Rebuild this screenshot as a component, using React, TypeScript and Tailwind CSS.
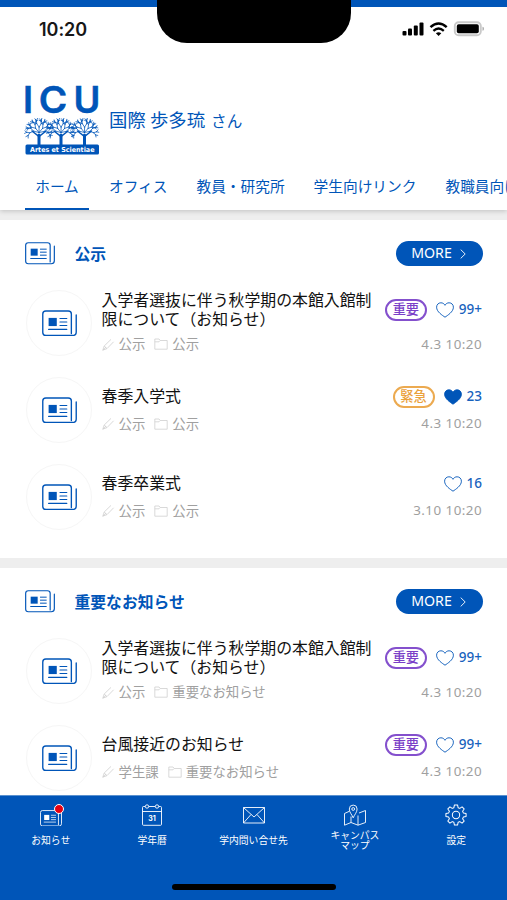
import React from "react";

const jp = "font-['Noto_Sans_CJK_JP',sans-serif]";
const latin = "font-['Noto_Sans','Noto_Sans_CJK_JP',sans-serif]";

type Priority = "重要" | "緊急";

interface Notice {
  title: string[];
  author: string;
  category: string;
  date: string;
  likes: string;
  liked?: boolean;
  priority?: Priority;
}

const announcements: Notice[] = [
  { title: ["入学者選抜に伴う秋学期の本館入館制", "限について（お知らせ）"], author: "公示", category: "公示", date: "4.3 10:20", likes: "99+", priority: "重要" },
  { title: ["春季入学式"], author: "公示", category: "公示", date: "4.3 10:20", likes: "23", liked: true, priority: "緊急" },
  { title: ["春季卒業式"], author: "公示", category: "公示", date: "3.10 10:20", likes: "16" },
];

const importantNotices: Notice[] = [
  { title: ["入学者選抜に伴う秋学期の本館入館制", "限について（お知らせ）"], author: "公示", category: "重要なお知らせ", date: "4.3 10:20", likes: "99+", priority: "重要" },
  { title: ["台風接近のお知らせ"], author: "学生課", category: "重要なお知らせ", date: "4.3 10:20", likes: "99+", priority: "重要" },
];

function NewsIcon({ className }: { className: string }) {
  return (
    <svg viewBox="0 0 36 27" className={className} fill="none" stroke="currentColor" strokeWidth="1.4" strokeLinecap="round">
      <path d="M35.2 5V22.5Q35.2 26.1 31.5 26.1H4Q.8 26.1 .8 23V4Q.8 .9 4 .9H27Q30.2 .9 30.2 4V24" />
      <rect x="6.8" y="8" width="8.4" height="8.4" fill="currentColor" stroke="none" />
      <path d="M18.5 8.6H25.5M18.5 12.2H25.5M18.5 15.8H25.5M6.8 19.8H25.5" strokeWidth="1.2" />
    </svg>
  );
}

function PenIcon() {
  return (
    <svg viewBox="0 0 13 13" className="size-[13px] shrink-0 text-[#cfcfcf]" fill="none" stroke="currentColor" strokeWidth=".8" strokeLinejoin="round">
      <path d="M.8 12.2 2.2 8 9 1.4M.8 12.2 5 10.6 11.6 3.8M2.2 8 5 10.6M.8 12.2 4 9.2" />
    </svg>
  );
}

function FolderIcon() {
  return (
    <svg viewBox="0 0 14 12" className="h-3 w-3.5 shrink-0 text-[#cfcfcf]" fill="none" stroke="currentColor" strokeWidth=".8">
      <path d="M.8 1H5L6.2 2.5H13.2V11.2H.8ZM.8 3.8H5L6.2 2.5" />
    </svg>
  );
}

function Heart({ filled }: { filled?: boolean }) {
  return (
    <svg viewBox="0 0 18 16" className="h-4 w-[18px] text-[#0055b8]" fill={filled ? "currentColor" : "none"} stroke="currentColor" strokeWidth=".9">
      <path d="M9 15.2C6.5 13.4.6 9.9.6 5.2.6 2.6 2.5.8 4.9.8 6.8.8 8.2 1.8 9 3.3 9.8 1.8 11.2.8 13.1.8 15.5.8 17.4 2.6 17.4 5.2 17.4 9.9 11.5 13.4 9 15.2Z" />
    </svg>
  );
}

function branch(x: number, y: number, angle: number, length: number, depth: number): string {
  const ex = x + Math.cos(angle) * length;
  const ey = y + Math.sin(angle) * length;
  const line = `M${x.toFixed(1)} ${y.toFixed(1)}L${ex.toFixed(1)} ${ey.toFixed(1)}`;
  if (depth === 0) return line;
  return line + branch(ex, ey, angle - 0.62, length * 0.78, depth - 1) + branch(ex, ey, angle + 0.52, length * 0.74, depth - 1);
}

function Tree({ x }: { x: number }) {
  const angles = [-2.9, -2.25, -1.55, -0.85, -0.2];
  return (
    <g fill="none" stroke="#0055b8" strokeLinecap="round">
      <path d={`M${x} 62V50`} strokeWidth="3" />
      <path d={`M${x - 7} 46L${x} 51.5L${x + 7} 46`} strokeWidth="1.5" />
      <path d={angles.map((a) => branch(x, 47.5, a, 5.4, 3)).join("")} strokeWidth=".75" />
    </g>
  );
}

function Logo() {
  return (
    <svg viewBox="-3 -10 82 80" className="-mt-2.5 -ml-[3px] h-20 w-[82px] shrink-0">
      <g fill="#0055b8" stroke="#0055b8" strokeWidth=".5" fontFamily="Inter" fontSize="36.5" fontWeight="600">
        <text x="-1" y="28">I</text>
        <text x="14.8" y="28" textLength="28.5" lengthAdjust="spacingAndGlyphs">C</text>
        <text x="49.5" y="28">U</text>
      </g>
      <Tree x={15} />
      <Tree x={37} />
      <Tree x={60.5} />
      <rect x="1.5" y="59.5" width="73.5" height="10" rx="1.5" fill="#0055b8" />
      <text x="6" y="67" textLength="64.5" lengthAdjust="spacingAndGlyphs" fontFamily="DejaVu Sans" fontSize="6.8" fontWeight="700" fill="white">Artes et Scientiae</text>
    </svg>
  );
}

function StatusBar() {
  return (
    <div className="relative flex h-[58px] items-center justify-between border-t-[7px] border-[#0055b8] pr-[23px] pl-[39px]">
      <span className="mb-[7px] font-['Inter',sans-serif] text-[18px] font-semibold tracking-[-0.05px] text-[#171717]">10:20</span>
      <div className="absolute -top-[7px] left-[157px] h-[43px] w-[194px] rounded-b-[30px] bg-black" />
      <svg viewBox="0 0 82 16" className="mb-[7px] h-4 w-[82px]" fill="black">
        <rect x="0.5" y="10" width="4" height="4.5" rx="1" />
        <rect x="6" y="7.5" width="4" height="7" rx="1" />
        <rect x="11.8" y="4.5" width="4" height="10" rx="1" />
        <rect x="17.5" y="1.5" width="4" height="13" rx="1" />
        <path d="M28.5 6.1Q36.6-1 44.7 6.1" fill="none" stroke="black" strokeWidth="2.5" />
        <path d="M31.4 9.8Q36.6 5.2 41.8 9.8" fill="none" stroke="black" strokeWidth="2.3" />
        <path d="M33.9 12.3Q36.6 10.3 39.3 12.3L36.6 15Z" />
        <rect x="52.8" y="1.2" width="26" height="13" rx="3.8" fill="none" stroke="#c9c9c9" strokeWidth="1.9" />
        <rect x="54.8" y="3.2" width="22" height="9" rx="1.8" />
        <path d="M80.5 5.8Q82 6 82 7.8T80.5 9.8Z" fill="#aaa" />
      </svg>
    </div>
  );
}

function MoreButton() {
  return (
    <button className={`${latin} flex h-[25px] w-[87px] items-center rounded-full bg-[#0055b8] pl-[15px] text-[14.2px] leading-none text-white`}>
      <span className="w-[41px] pb-px">MORE</span>
      <svg viewBox="0 0 6 10" className="ml-2 h-2.5 w-1.5" fill="none" stroke="white" strokeWidth=".9">
        <path d="m.7.6 4.5 4.4L.7 9.4" />
      </svg>
    </button>
  );
}

function NoticeRow({ notice }: { notice: Notice }) {
  return (
    <article className="flex h-[87px] items-center pr-[25px] pl-[26px]">
      <div className="flex size-[66px] shrink-0 items-center justify-center rounded-full border border-[#f6f6f6] pt-px pl-px">
        <NewsIcon className="h-[26.5px] w-[35px] text-[#0055b8]" />
      </div>
      <div className="ml-[9.5px] flex min-w-0 grow flex-col gap-1.5">
        <div className="flex items-center justify-between">
          <h3 className="text-[15.88px] leading-[18.5px] whitespace-nowrap text-[#111]">
            {notice.title.map((line) => (
              <span key={line} className="block">{line}</span>
            ))}
          </h3>
          <div className="flex h-[22px] shrink-0 items-center">
            {notice.priority && (
              <span className={`mr-[9px] flex h-[22px] w-[42px] items-center justify-center rounded-full border-2 pb-0.5 text-[13.2px] leading-none font-medium ${notice.priority === "重要" ? "border-[#8450cd] text-[#7a3fc8]" : "border-[#ecaa50] text-[#eaa23e]"}`}>
                {notice.priority}
              </span>
            )}
            <Heart filled={notice.liked} />
            <span className={`${latin} ml-[5px] text-[13.5px] leading-none font-medium text-[#1762bd]`}>{notice.likes}</span>
          </div>
        </div>
        <div className="flex h-5 items-center justify-between text-[13.4px] leading-none text-[#a0a0a0]">
          <div className="flex items-center whitespace-nowrap">
            <PenIcon />
            <span className="mr-[9px] ml-1">{notice.author}</span>
            <FolderIcon />
            <span className="ml-1">{notice.category}</span>
          </div>
          <time className={`${latin} pt-px tracking-[0.45px]`}>{notice.date}</time>
        </div>
      </div>
    </article>
  );
}

function Section({ title, notices }: { title: string; notices: Notice[] }) {
  return (
    <section className="bg-white pt-2 pb-[18px]">
      <header className="flex h-[51px] items-center pr-6 pl-[25px]">
        <NewsIcon className="h-[22.5px] w-[30px] text-[#0055b8]" />
        <h2 className="mr-auto ml-[19.5px] text-[15.8px] leading-none font-bold text-[#0055b8]">{title}</h2>
        <MoreButton />
      </header>
      {notices.map((n) => (
        <NoticeRow key={n.title[0]} notice={n} />
      ))}
    </section>
  );
}

const navIcon = "h-[22px] w-6";

function NavItem({ label, children }: { label: string[]; children: React.ReactNode }) {
  return (
    <div className="flex flex-1 flex-col items-center pt-2">
      {children}
      <div className="flex h-[28px] flex-col items-center justify-center text-[9.8px] leading-[10px] whitespace-nowrap">
        {label.map((l) => (
          <span key={l}>{l}</span>
        ))}
      </div>
    </div>
  );
}

function BottomNav() {
  return (
    <nav className="relative flex h-[105px] shrink-0 border-t border-[#5a91cf] bg-[#0055b8] text-white">
      <NavItem label={["お知らせ"]}>
        <div className="relative flex h-[22px] items-end">
          <NewsIcon className="h-[16.5px] w-[22px]" />
          <span className="absolute top-0 -right-[2px] size-2.5 rounded-full border border-white bg-[#e60012]" />
        </div>
      </NavItem>
      <NavItem label={["学年暦"]}>
        <svg viewBox="0 0 24 22" className={navIcon} fill="none" stroke="white" strokeWidth=".9">
          <rect x="2.5" y="2.5" width="19" height="18.8" rx="1" />
          <path d="M2.5 7.5H21.5" />
          <circle cx="7" cy="2.5" r="1.7" fill="#0055b8" />
          <circle cx="17" cy="2.5" r="1.7" fill="#0055b8" />
          <text x="12" y="16.5" textAnchor="middle" fontFamily="Inter" fontSize="7" fontWeight="700" fill="white" stroke="none">31</text>
        </svg>
      </NavItem>
      <NavItem label={["学内問い合せ先"]}>
        <svg viewBox="0 0 24 22" className={navIcon} fill="none" stroke="white" strokeWidth=".9">
          <path d="M1.5 3.5H22.5V19H1.5ZM1.5 3.5 12 13 22.5 3.5M1.5 19 9 10.5M22.5 19 15 10.5" />
        </svg>
      </NavItem>
      <NavItem label={["キャンパス", "マップ"]}>
        <svg viewBox="0 0 24 22" className={navIcon} fill="none" stroke="white" strokeWidth=".9" strokeLinejoin="round">
          <path d="M6.5 7.2 1.5 9.5V21.2L8 18.5 15 21.2 22.5 18.5V6.5L16 9M8 12.5V18.5M15 11.5V21.2" />
          <path d="M10.2 13.8C9 10.7 6.3 8.3 6.3 5A3.9 3.9 0 0 1 14.1 5C14.1 8.3 11.4 10.7 10.2 13.8Z" />
          <circle cx="10.2" cy="5" r="1.4" />
        </svg>
      </NavItem>
      <NavItem label={["設定"]}>
        <svg viewBox="0 0 24 24" className={navIcon} fill="none" stroke="white" strokeWidth="1.1" strokeLinejoin="round">
          <path d="m10.3 1-.6 3-1.8.8L5.4 3.1 3.1 5.4l1.7 2.5-.8 1.8-3 .6v3.4l3 .6.8 1.8-1.7 2.5 2.3 2.3 2.5-1.7 1.8.8.6 3h3.4l.6-3 1.8-.8 2.5 1.7 2.3-2.3-1.7-2.5.8-1.8 3-.6v-3.4l-3-.6-.8-1.8 1.7-2.5-2.3-2.3-2.5 1.7-1.8-.8-.6-3Z" />
          <circle cx="12" cy="12" r="4" />
        </svg>
      </NavItem>
      <div className="absolute bottom-[10px] left-[172px] h-1.5 w-[164px] rounded-full bg-black" />
    </nav>
  );
}

export default function App() {
  return (
    <div className={`${jp} flex h-[900px] w-[507px] flex-col overflow-hidden bg-white`}>
      <header className="relative z-10 h-[210px] shrink-0 bg-white shadow-[0_1px_5px_rgba(0,0,0,0.2)]">
        <StatusBar />
        <div className="flex h-[104px] items-start pt-[27px] pl-6 text-[#0055b8]">
          <Logo />
          <p className="mt-[21px] ml-[6px] flex items-baseline text-[18.4px] leading-[26px] whitespace-pre">
            国際 歩多琉<span className="ml-1.5 text-[15.6px]">さん</span>
          </p>
        </div>
        <div className="flex h-12 gap-[29px] overflow-hidden pl-[25px] text-[14.7px] leading-[47px] whitespace-nowrap text-[#0055b8]">
          <span className="-mr-[9px] w-16 shrink-0 border-b-2 border-[#0055b8] text-center">ホーム</span>
          <span className="shrink-0">オフィス</span>
          <span className="shrink-0">教員・研究所</span>
          <span className="shrink-0">学生向けリンク</span>
          <span className="shrink-0">教職員向けリンク</span>
        </div>
      </header>
      <main className="flex min-h-0 grow flex-col gap-2.5 overflow-hidden bg-[#eee] pt-2.5 *:shrink-0">
        <Section title="公示" notices={announcements} />
        <Section title="重要なお知らせ" notices={importantNotices} />
      </main>
      <BottomNav />
    </div>
  );
}
